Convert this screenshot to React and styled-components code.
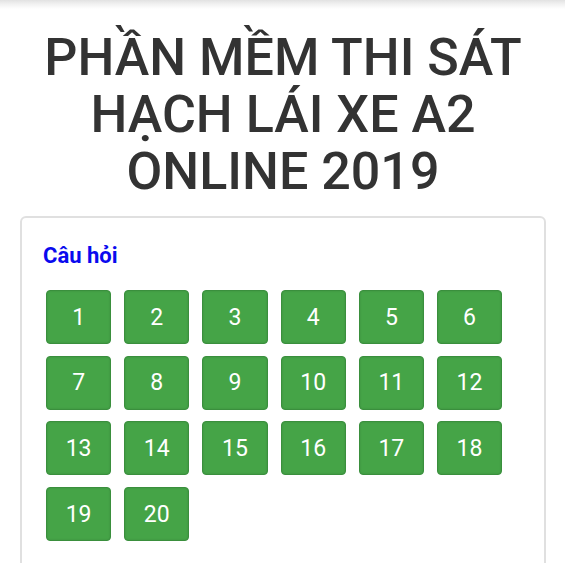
import React from "react";
import styled, { createGlobalStyle } from "styled-components";

const Global = createGlobalStyle`
  html, body { margin: 0; padding: 0; background: #fff; }
  body { font-family: Roboto, "Noto Sans", Arial, sans-serif; }
`;

const Page = styled.div`
  position: relative;
  padding: 8px 19px 0 20px;
  overflow: hidden;
  height: 563px;
  box-sizing: border-box;
`;

const TopShadow = styled.div`
  position: absolute;
  top: 0;
  left: 0;
  right: 0;
  height: 9px;
  background: linear-gradient(to bottom, #e2e2e2 0%, #f1f1f1 45%, rgba(255,255,255,0) 100%);
`;

const Title = styled.h1`
  margin: 21px 0 16px;
  text-align: center;
  font-family: Roboto, "Noto Sans", Arial, sans-serif;
  font-weight: 500;
  font-size: 52px;
  line-height: 57px;
  color: #333;
`;

const Card = styled.div`
  border: 2px solid #e0e0e0;
  border-radius: 6px;
  padding: 25px 20px 20px 20px;
  min-height: 400px;
`;

const Heading = styled.h3`
  margin: 0 0 21px 1px;
  font-size: 22px;
  font-weight: 700;
  color: #0a0aee;
  line-height: 26px;
`;

const Grid = styled.div`
  display: grid;
  grid-template-columns: repeat(6, 65.2px);
  column-gap: 13px;
  row-gap: 11.7px;
  padding-left: 4px;
`;

const QButton = styled.button`
  width: 100%;
  height: 54px;
  box-sizing: border-box;
  background: #45a447;
  border: 1px solid #3a8f3d;
  border-radius: 4px;
  color: #fff;
  font-family: Roboto, "Noto Sans", Arial, sans-serif;
  font-size: 23px;
  font-weight: 400;
  padding: 0;
  display: flex;
  align-items: center;
  justify-content: center;
  box-shadow: inset 0 0 2px rgba(0,0,0,0.15);
`;

export default function App() {
  const nums = Array.from({ length: 20 }, (_, i) => i + 1);
  return (
    <>
      <Global />
      <Page>
        <TopShadow />
        <Title>PHẦN MỀM THI SÁT HẠCH LÁI XE A2 ONLINE 2019</Title>
        <Card>
          <Heading>Câu hỏi</Heading>
          <Grid>
            {nums.map((n) => (
              <QButton key={n}>{n}</QButton>
            ))}
          </Grid>
        </Card>
      </Page>
    </>
  );
}
